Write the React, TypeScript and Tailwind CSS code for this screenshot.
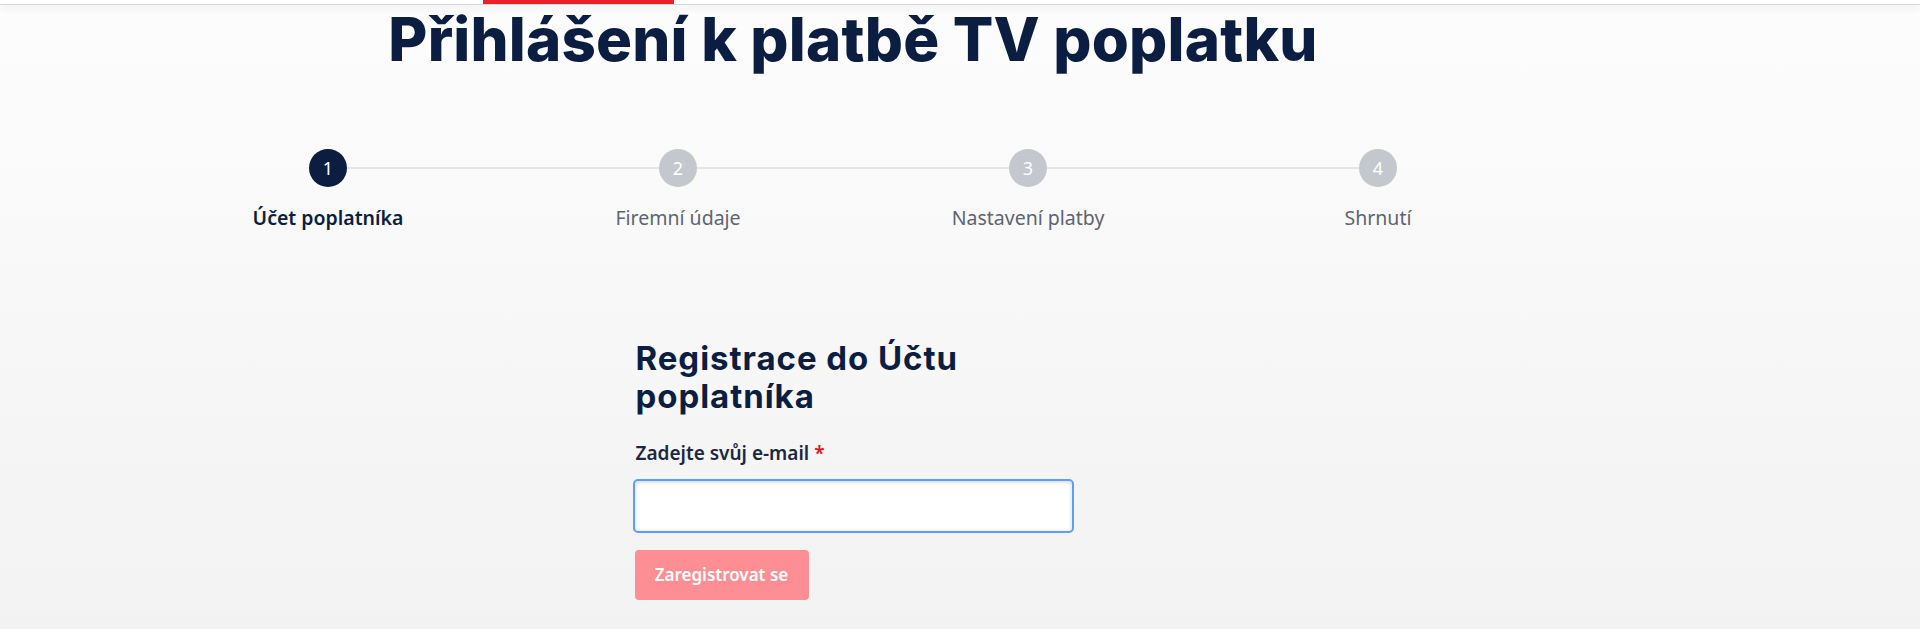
import * as React from "react";

const steps = [
  { n: 1, label: "Účet poplatníka" },
  { n: 2, label: "Firemní údaje" },
  { n: 3, label: "Nastavení platby" },
  { n: 4, label: "Shrnutí" },
];

const heading = { fontFamily: "Inter, 'Noto Sans', sans-serif" };
const body = { fontFamily: "'Noto Sans', Lato, sans-serif" };

export default function App() {
  const active = 1;

  return (
    <div className="min-h-screen w-full bg-gradient-to-b from-[#fdfdfd] to-[#f2f2f2]">
      {/* spodní okraj hlavičky, zbytek je odscrollovaný */}
      <div className="relative z-10 h-[5px] border-b border-[#d6d8dd] bg-white pl-[483px] shadow-[0_3px_8px_rgba(0,0,0,0.07)]">
        <div className="h-[4px] w-[191px] bg-[#e8202a]" />
      </div>

      <div className="ml-[153px] w-[1400px]">
        <h1
          style={heading}
          className="mt-[4px] text-center text-[60px] leading-none font-extrabold tracking-[0.2px] text-[#0b1e42]"
        >
          Přihlášení k platbě TV poplatku
        </h1>

        {/* kroky */}
        <div className="relative mt-[80px] grid grid-cols-4">
          <div className="absolute top-[18px] right-[175px] left-[175px] h-[2px] bg-[#e4e5e8]" />
          {steps.map((s) => {
            const isActive = s.n === active;
            return (
              <div key={s.n} className="relative flex flex-col items-center">
                <div
                  style={body}
                  className={
                    "flex size-[38px] items-center justify-center rounded-full text-[18px] text-white " +
                    (isActive ? "bg-[#0b1e42]" : "bg-[#c4c8ce]")
                  }
                >
                  {s.n}
                </div>
                <span
                  style={body}
                  className={
                    "mt-[18px] text-[19.5px] leading-[26px] " +
                    (isActive
                      ? "font-semibold text-[#0b1e42]"
                      : "text-[#5d6470]")
                  }
                >
                  {s.label}
                </span>
              </div>
            );
          })}
        </div>

        {/* formulář */}
        <div className="mx-auto mt-[108px] w-[441px]">
          <h2
            style={heading}
            className="pl-[3px] text-[33px] leading-[38px] font-bold tracking-[0.95px] text-[#0b1e42]"
          >
            Registrace do Účtu poplatníka
          </h2>

          <label
            style={body}
            className="mt-[25px] block pl-[3px] text-[19px] leading-[26px] font-semibold text-[#1c2742]"
          >
            Zadejte svůj e-mail <span className="text-[#e3101c]">*</span>
          </label>

          <input
            type="email"
            className="mt-[13px] block h-[54px] w-full rounded-[5px] border-2 border-[#5f9dfb] bg-white px-3 shadow-[inset_0_1px_4px_rgba(0,0,0,0.18)] outline-none"
          />

          <button
            type="button"
            disabled
            style={body}
            className="mt-[17px] ml-[2px] h-[50px] w-[174px] rounded-[4px] bg-[#fd8f94] text-[17px] font-semibold text-white"
          >
            Zaregistrovat se
          </button>
        </div>
      </div>
    </div>
  );
}
